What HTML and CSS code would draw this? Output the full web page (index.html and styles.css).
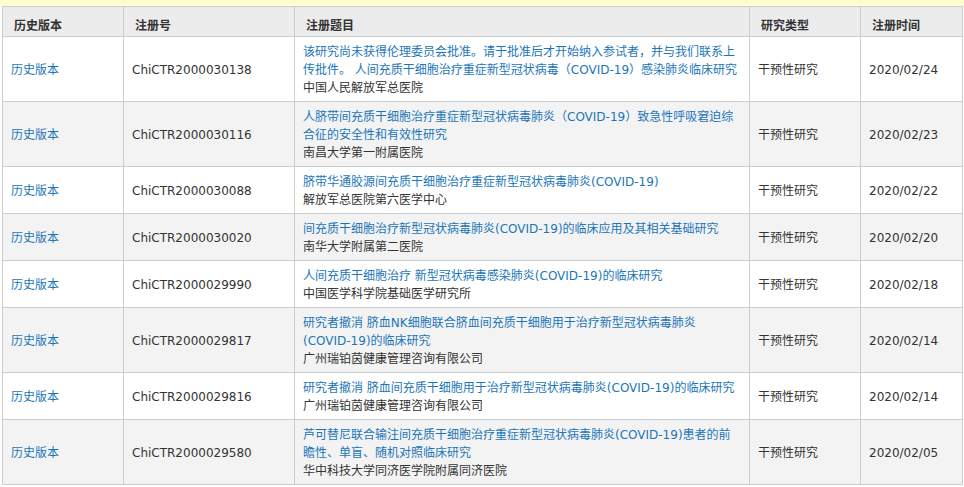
FILE: index.html
```html
<!DOCTYPE html>
<html lang="zh-CN">
<head>
<meta charset="utf-8">
<title>注册列表</title>
<link rel="stylesheet" href="styles.css">
</head>
<body>
<div class="notice-strip"></div>
<div class="wrap">
<table class="list">
  <colgroup>
    <col class="c-hist"><col class="c-reg"><col class="c-title"><col class="c-type"><col class="c-date">
  </colgroup>
  <thead>
    <tr><th>历史版本</th><th>注册号</th><th>注册题目</th><th>研究类型</th><th>注册时间</th></tr>
  </thead>
  <tbody>
    <tr>
      <td><a href="#">历史版本</a></td>
      <td>ChiCTR2000030138</td>
      <td class="title"><a href="#">该研究尚未获得伦理委员会批准。请于批准后才开始纳入参试者，并与我们联系上传批件。 人间充质干细胞治疗重症新型冠状病毒（COVID-19）感染肺炎临床研究</a><div>中国人民解放军总医院</div></td>
      <td>干预性研究</td>
      <td>2020/02/24</td>
    </tr>
    <tr class="alt">
      <td><a href="#">历史版本</a></td>
      <td>ChiCTR2000030116</td>
      <td class="title"><a href="#">人脐带间充质干细胞治疗重症新型冠状病毒肺炎（COVID-19）致急性呼吸窘迫综合征的安全性和有效性研究</a><div>南昌大学第一附属医院</div></td>
      <td>干预性研究</td>
      <td>2020/02/23</td>
    </tr>
    <tr>
      <td><a href="#">历史版本</a></td>
      <td>ChiCTR2000030088</td>
      <td class="title"><a href="#">脐带华通胶源间充质干细胞治疗重症新型冠状病毒肺炎(COVID-19)</a><div>解放军总医院第六医学中心</div></td>
      <td>干预性研究</td>
      <td>2020/02/22</td>
    </tr>
    <tr class="alt">
      <td><a href="#">历史版本</a></td>
      <td>ChiCTR2000030020</td>
      <td class="title"><a href="#">间充质干细胞治疗新型冠状病毒肺炎(COVID-19)的临床应用及其相关基础研究</a><div>南华大学附属第二医院</div></td>
      <td>干预性研究</td>
      <td>2020/02/20</td>
    </tr>
    <tr>
      <td><a href="#">历史版本</a></td>
      <td>ChiCTR2000029990</td>
      <td class="title"><a href="#">人间充质干细胞治疗 新型冠状病毒感染肺炎(COVID-19)的临床研究</a><div>中国医学科学院基础医学研究所</div></td>
      <td>干预性研究</td>
      <td>2020/02/18</td>
    </tr>
    <tr class="alt">
      <td><a href="#">历史版本</a></td>
      <td>ChiCTR2000029817</td>
      <td class="title"><a href="#">研究者撤消 脐血NK细胞联合脐血间充质干细胞用于治疗新型冠状病毒肺炎(COVID-19)的临床研究</a><div>广州瑞铂茵健康管理咨询有限公司</div></td>
      <td>干预性研究</td>
      <td>2020/02/14</td>
    </tr>
    <tr>
      <td><a href="#">历史版本</a></td>
      <td>ChiCTR2000029816</td>
      <td class="title"><a href="#">研究者撤消 脐血间充质干细胞用于治疗新型冠状病毒肺炎(COVID-19)的临床研究</a><div>广州瑞铂茵健康管理咨询有限公司</div></td>
      <td>干预性研究</td>
      <td>2020/02/14</td>
    </tr>
    <tr class="alt">
      <td><a href="#">历史版本</a></td>
      <td>ChiCTR2000029580</td>
      <td class="title"><a href="#">芦可替尼联合输注间充质干细胞治疗重症新型冠状病毒肺炎(COVID-19)患者的前瞻性、单盲、随机对照临床研究</a><div>华中科技大学同济医学院附属同济医院</div></td>
      <td>干预性研究</td>
      <td>2020/02/05</td>
    </tr>
  </tbody>
</table>
</div>
</body>
</html>
```
FILE: styles.css
```css
html, body {
  margin: 0;
  padding: 0;
  background: #fff;
}
body {
  font-family: "DejaVu Sans", "Noto Sans CJK SC", sans-serif;
  font-size: 12px;
  color: #333;
}
.notice-strip {
  height: 6px;
  background: #fffed3;
}
.wrap {
  padding: 0 2px;
}
.list {
  border-collapse: collapse;
  table-layout: fixed;
  width: 960px;
}
.c-hist { width: 121px; }
.c-reg { width: 171px; }
.c-title { width: 455px; }
.c-type { width: 111px; }
.c-date { width: 102px; }
.list th,
.list td {
  border: 1px solid #cdcdcd;
  line-height: 18px;
  text-align: left;
}
.list th {
  background: #ececec;
  font-weight: bold;
  padding: 10px 10px 1px 11px;
  color: #333;
}
.list td {
  padding: 6px 8px 4px 8px;
  vertical-align: middle;
  background: #fff;
}
.list tr.alt td {
  background: #f3f3f3;
}
.list a {
  color: #1b76b9;
  text-decoration: none;
}
```
